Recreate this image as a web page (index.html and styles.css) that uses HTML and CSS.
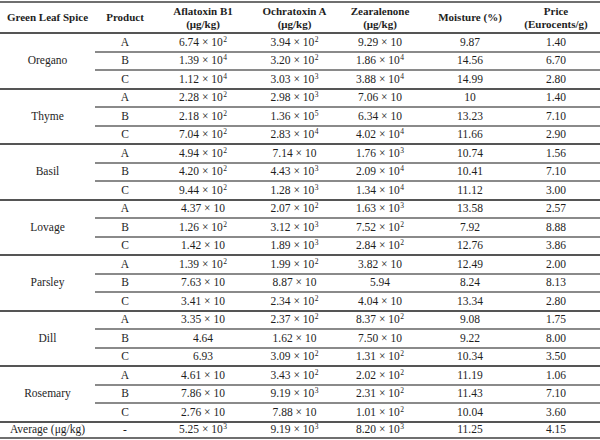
FILE: index.html
```html
<!DOCTYPE html>
<html lang="en">
<head>
<meta charset="utf-8">
<title>Mycotoxins in green leaf spices</title>
<link rel="stylesheet" href="styles.css">
</head>
<body>
<table class="data">
  <colgroup>
    <col class="c-spice"><col class="c-prod"><col class="c-afla"><col class="c-ochra"><col class="c-zea"><col class="c-moist"><col class="c-price">
  </colgroup>
  <thead>
    <tr>
      <th>Green Leaf Spice</th>
      <th>Product</th>
      <th>Aflatoxin B1<br>(μg/kg)</th>
      <th>Ochratoxin A<br>(μg/kg)</th>
      <th>Zearalenone<br>(μg/kg)</th>
      <th>Moisture (%)</th>
      <th class="price">Price<br>(Eurocents/g)</th>
    </tr>
  </thead>
  <tbody>
    <tr class="first"><td class="spice" rowspan="3">Oregano</td><td>A</td><td>6.74 × 10<sup>2</sup></td><td>3.94 × 10<sup>2</sup></td><td>9.29 × 10</td><td>9.87</td><td class="price">1.40</td></tr>
    <tr><td>B</td><td>1.39 × 10<sup>4</sup></td><td>3.20 × 10<sup>2</sup></td><td>1.86 × 10<sup>4</sup></td><td>14.56</td><td class="price">6.70</td></tr>
    <tr><td>C</td><td>1.12 × 10<sup>4</sup></td><td>3.03 × 10<sup>3</sup></td><td>3.88 × 10<sup>4</sup></td><td>14.99</td><td class="price">2.80</td></tr>

    <tr class="first"><td class="spice" rowspan="3">Thyme</td><td>A</td><td>2.28 × 10<sup>2</sup></td><td>2.98 × 10<sup>3</sup></td><td>7.06 × 10</td><td>10</td><td class="price">1.40</td></tr>
    <tr><td>B</td><td>2.18 × 10<sup>2</sup></td><td>1.36 × 10<sup>5</sup></td><td>6.34 × 10</td><td>13.23</td><td class="price">7.10</td></tr>
    <tr><td>C</td><td>7.04 × 10<sup>2</sup></td><td>2.83 × 10<sup>4</sup></td><td>4.02 × 10<sup>4</sup></td><td>11.66</td><td class="price">2.90</td></tr>

    <tr class="first"><td class="spice" rowspan="3">Basil</td><td>A</td><td>4.94 × 10<sup>2</sup></td><td>7.14 × 10</td><td>1.76 × 10<sup>3</sup></td><td>10.74</td><td class="price">1.56</td></tr>
    <tr><td>B</td><td>4.20 × 10<sup>2</sup></td><td>4.43 × 10<sup>3</sup></td><td>2.09 × 10<sup>4</sup></td><td>10.41</td><td class="price">7.10</td></tr>
    <tr><td>C</td><td>9.44 × 10<sup>2</sup></td><td>1.28 × 10<sup>3</sup></td><td>1.34 × 10<sup>4</sup></td><td>11.12</td><td class="price">3.00</td></tr>

    <tr class="first"><td class="spice" rowspan="3">Lovage</td><td>A</td><td>4.37 × 10</td><td>2.07 × 10<sup>2</sup></td><td>1.63 × 10<sup>3</sup></td><td>13.58</td><td class="price">2.57</td></tr>
    <tr><td>B</td><td>1.26 × 10<sup>2</sup></td><td>3.12 × 10<sup>3</sup></td><td>7.52 × 10<sup>2</sup></td><td>7.92</td><td class="price">8.88</td></tr>
    <tr><td>C</td><td>1.42 × 10</td><td>1.89 × 10<sup>3</sup></td><td>2.84 × 10<sup>2</sup></td><td>12.76</td><td class="price">3.86</td></tr>

    <tr class="first"><td class="spice" rowspan="3">Parsley</td><td>A</td><td>1.39 × 10<sup>2</sup></td><td>1.99 × 10<sup>2</sup></td><td>3.82 × 10</td><td>12.49</td><td class="price">2.00</td></tr>
    <tr><td>B</td><td>7.63 × 10</td><td>8.87 × 10</td><td>5.94</td><td>8.24</td><td class="price">8.13</td></tr>
    <tr><td>C</td><td>3.41 × 10</td><td>2.34 × 10<sup>2</sup></td><td>4.04 × 10</td><td>13.34</td><td class="price">2.80</td></tr>

    <tr class="first"><td class="spice" rowspan="3">Dill</td><td>A</td><td>3.35 × 10</td><td>2.37 × 10<sup>2</sup></td><td>8.37 × 10<sup>2</sup></td><td>9.08</td><td class="price">1.75</td></tr>
    <tr><td>B</td><td>4.64</td><td>1.62 × 10</td><td>7.50 × 10</td><td>9.22</td><td class="price">8.00</td></tr>
    <tr><td>C</td><td>6.93</td><td>3.09 × 10<sup>2</sup></td><td>1.31 × 10<sup>2</sup></td><td>10.34</td><td class="price">3.50</td></tr>

    <tr class="first"><td class="spice" rowspan="3">Rosemary</td><td>A</td><td>4.61 × 10</td><td>3.43 × 10<sup>2</sup></td><td>2.02 × 10<sup>2</sup></td><td>11.19</td><td class="price">1.06</td></tr>
    <tr><td>B</td><td>7.86 × 10</td><td>9.19 × 10<sup>3</sup></td><td>2.31 × 10<sup>2</sup></td><td>11.43</td><td class="price">7.10</td></tr>
    <tr><td>C</td><td>2.76 × 10</td><td>7.88 × 10</td><td>1.01 × 10<sup>2</sup></td><td>10.04</td><td class="price">3.60</td></tr>

    <tr class="first avg"><td class="spice">Average (μg/kg)</td><td>-</td><td>5.25 × 10<sup>3</sup></td><td>9.19 × 10<sup>3</sup></td><td>8.20 × 10<sup>3</sup></td><td>11.25</td><td class="price">4.15</td></tr>
  </tbody>
</table>
</body>
</html>
```

FILE: styles.css
```css
html, body {
  margin: 0;
  padding: 0;
  background: #ffffff;
}

body {
  padding-top: 1px;
  font-family: "Liberation Serif", "Times New Roman", serif;
  color: #1e1e1e;
}

.data {
  width: 600px;
  border-collapse: separate;
  border-spacing: 0;
  table-layout: fixed;
  font-size: 11.5px;
  line-height: 13px;
}

.c-spice { width: 95px; }
.c-prod { width: 60px; }
.c-afla { width: 96px; }
.c-ochra { width: 87px; }
.c-zea { width: 84px; }
.c-moist { width: 96px; }
.c-price { width: 82px; }

.data th {
  font-weight: bold;
  font-size: 11px;
  line-height: 13px;
  height: 31px;
  box-sizing: border-box;
  padding: 0;
  text-align: center;
  vertical-align: middle;
  border-top: 2px solid #6f6f6f;
}

.data td {
  height: 18.5px;
  box-sizing: border-box;
  padding: 0;
  text-align: center;
  vertical-align: middle;
  border-top: 2px solid #8a8a8a;
  white-space: nowrap;
}

.data tr.first td {
  border-top: 2px solid #555555;
}

.data .price {
  padding-right: 6px;
}

.data tr.avg td {
  border-bottom: 2px solid #6f6f6f;
}

.data sup {
  font-size: 7.5px;
  line-height: 0;
  vertical-align: 0;
  position: relative;
  top: -4px;
  margin-left: 0.5px;
}
```
